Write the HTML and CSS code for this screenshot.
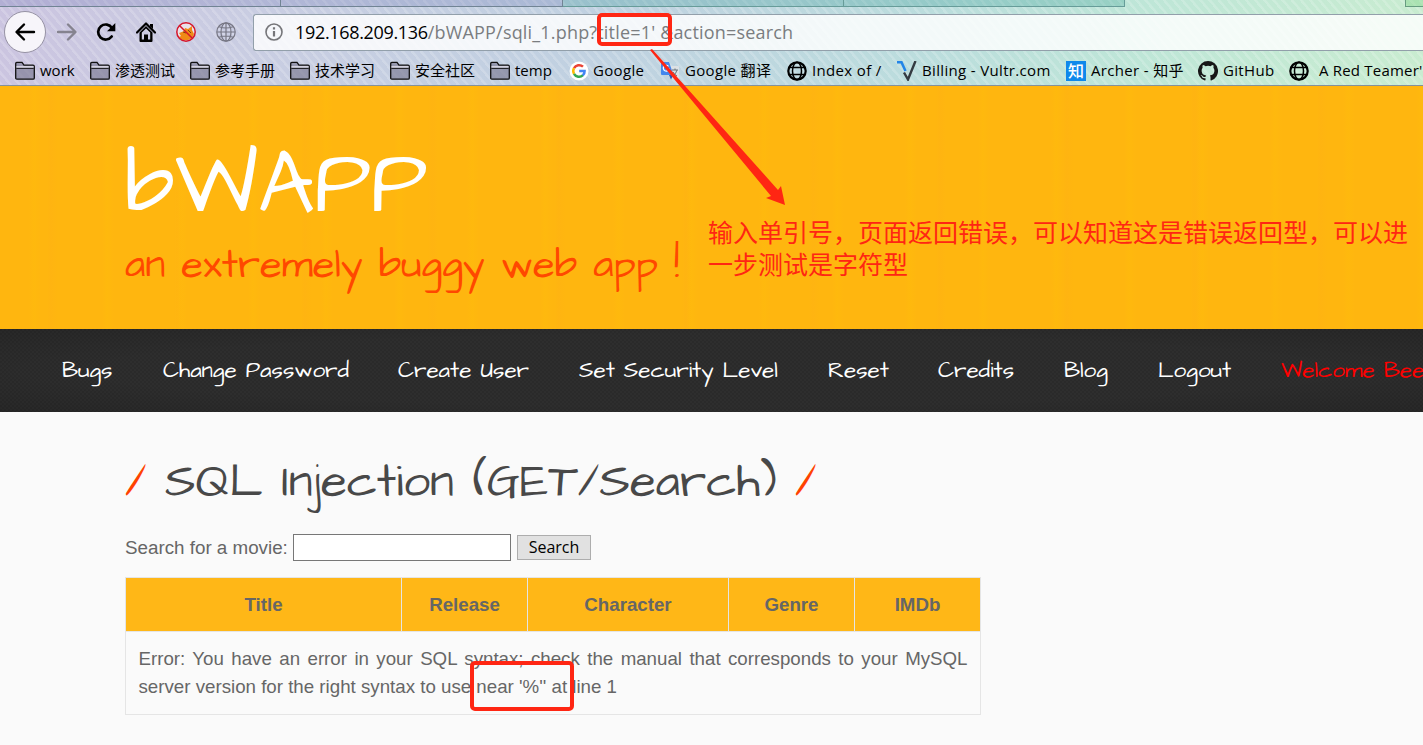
FILE: index.html
```html
<!DOCTYPE html>
<html lang="zh-CN">
<head>
<meta charset="utf-8">
<title>bWAPP - SQL Injection</title>
<link rel="stylesheet" href="styles.css">
</head>
<body>
<svg class="defs" width="0" height="0" aria-hidden="true">
  <symbol id="folder" viewBox="0 0 20 20"><path d="M.7 17V2.500Q.7 1.400 1.800 1.400H7L9 4.200h9q1.300 0 1.300 1.200V17q0 1.200-1.200 1.200H1.900Q.7 18.200.7 17Z" fill="#73718a" fill-opacity=".6" stroke="#111" stroke-width="1.300"/><path d="M1.300 7.300h17.400" stroke="#111" stroke-width="1.100"/><path d="M1.400 5.900h17.200" stroke="#e8e6f0" stroke-width="1.300"/></symbol>
  <symbol id="globe" viewBox="0 0 20 20"><g fill="none" stroke="currentColor"><circle cx="10" cy="10" r="8.700" stroke-width="2.200"/><ellipse cx="10" cy="10" rx="4.500" ry="8.700" stroke-width="1.500"/><path d="M2.500 6.500h15M2.500 13.500h15" stroke-width="1.500"/></g></symbol>
</svg>
<header class="browser">
  <div class="tabs"><i></i><i></i><i></i><i></i><b></b></div>
  <div class="toolbar">
    <span class="back"><svg width="22" height="20" viewBox="0 0 22 20"><path d="M20 10H3M10 2.500 2.500 10l7.500 7.500" fill="none" stroke="#000" stroke-width="2.400" stroke-linecap="round" stroke-linejoin="round"/></svg></span>
    <svg class="forward" width="22" height="20" viewBox="0 0 22 20"><path d="M2 10h17M12 2.500l7.500 7.500-7.500 7.500" fill="none" stroke="#85838f" stroke-width="2.400" stroke-linecap="round" stroke-linejoin="round"/></svg>
    <svg class="reload" width="20" height="20" viewBox="0 0 20 20"><path d="M15.700 14.500A7.500 7.500 0 1 1 16 6" fill="none" stroke="#000" stroke-width="2.700" stroke-linecap="round"/><path d="M19.300 1v8.300h-8.300Z"/></svg>
    <svg class="home" width="20" height="20" viewBox="0 0 20 20"><path d="M1 10.500 10 1.500l9 9" fill="none" stroke="#000" stroke-width="2.200" stroke-linecap="round" stroke-linejoin="round"/><path d="M14 2h3v5l-3-2.800Z"/><path fill-rule="evenodd" d="M3.500 10.500 10 4l6.500 6.500V19q0 1-1 1h-11q-1 0-1-1ZM5.800 10.400V17.500H8v-5h4v5h2.200v-7.100L10 6.500Z"/><path d="M9.300 14h2v4h-2z"/></svg>
    <svg class="block" width="20" height="20" viewBox="0 0 20 20"><circle cx="10" cy="10" r="9" fill="#e9e1e9"/><path d="M3 11q3-1 5-2l1-3 3 1 4-3v4l2 4q-1 5-6 6-7 1-9-3l2-1Z" fill="#ef8a16"/><path d="m7 10 3 1M12 8l3 3" stroke="#86420c"/><circle cx="10" cy="10" r="9.200" fill="none" stroke="#d5152b" stroke-width="1.500"/><path d="m3.700 3.700 12.600 12.600" stroke="#d5152b" stroke-width="1.500"/></svg>
    <svg class="net" width="20" height="20" viewBox="0 0 20 20"><g fill="none" stroke="#777784" stroke-width="1.200"><circle cx="10" cy="10" r="9.200"/><ellipse cx="10" cy="10" rx="5" ry="9.200"/><path d="M10 1v18M1 10h18M3 4.700q7 2.600 14 0M3 15.300q7-2.600 14 0"/></g></svg>
    <div class="address">
      <svg width="18" height="18" viewBox="0 0 18 18"><circle cx="9" cy="9" r="8" fill="none" stroke="#757579" stroke-width="1.600"/><path d="M9 8v5.500M9 4.300v2.200" stroke="#757579" stroke-width="2.200"/></svg>
      <span class="url"><strong>192.168.209.136</strong>/bWAPP/sqli_1.php?title=1' &amp;action=search</span>
    </div>
  </div>
  <nav class="bookmarks">
    <span><svg><use href="#folder"/></svg><em>work</em></span>
    <span><svg><use href="#folder"/></svg><em>渗透测试</em></span>
    <span><svg><use href="#folder"/></svg><em>参考手册</em></span>
    <span><svg><use href="#folder"/></svg><em>技术学习</em></span>
    <span><svg><use href="#folder"/></svg><em>安全社区</em></span>
    <span><svg><use href="#folder"/></svg><em>temp</em></span>
    <span class="google"><svg viewBox="0 0 20 20"><circle cx="10" cy="10" r="9.500" fill="#fff"/><g fill="none" stroke-width="2.500"><path d="M5 7.200A5.800 5.800 0 0 1 14 5.700" stroke="#ea4335"/><path d="M5 12.800a5.800 5.800 0 0 1 0-5.600" stroke="#fbbc05"/><path d="M14 14.200a5.800 5.800 0 0 1-9-1.400" stroke="#34a853"/><path d="M10.200 10h5.400a5.500 5.500 0 0 1-1.800 4.400" stroke="#4285f4"/></g></svg><em class="wide">Google</em></span>
    <span><svg viewBox="0 0 20 20"><path d="M8 5h10q1 0 1 1v11q0 1-1 1h-7Z" fill="#dce1e5"/><path d="M2 1h7l4.500 13H2q-1 0-1-1V2q0-1 1-1Z" fill="#4387ed"/><path d="m9 14h4.500L11 18.500Z" fill="#2557b5"/><path d="M8.500 5.400A2.900 2.900 0 1 0 9 8H6.500" fill="none" stroke="#fff" stroke-width="1.200"/><path d="M12 9h6M15 7.500V9m2 0q-1 4-4 6m0-4q2 3 4 4" stroke="#68747c" fill="none"/></svg><em class="wide">Google 翻译</em></span>
    <span><svg><use href="#globe"/></svg><em class="wide">Index of /</em></span>
    <span><svg viewBox="0 0 20 20"><path d="M0 1.200h4.500L8.500 10" fill="none" stroke="#2385e8" stroke-width="2.500"/><path d="m7 11.500 4 7L18.500 0" fill="none" stroke="#343b42" stroke-width="2.400"/></svg><em class="wide">Billing - Vultr.com</em></span>
    <span><i class="zhi">知</i><em class="wide">Archer - 知乎</em></span>
    <span><svg viewBox="0 0 16 16"><path fill="#171717" d="M8 0a8 8 0 0 0-2.530 15.590c.4.070.55-.17.550-.38v-1.490c-2.230.48-2.700-.95-2.700-.95-.36-.92-.89-1.170-.89-1.170-.73-.5.050-.49.050-.49.810.060 1.230.83 1.230.83.720 1.220 1.880.87 2.340.66.070-.52.280-.87.510-1.070-1.780-.2-3.640-.89-3.640-3.950 0-.87.310-1.590.82-2.150-.08-.2-.36-1.020.08-2.120 0 0 .67-.21 2.200.82a7.600 7.600 0 0 1 4 0c1.530-1.040 2.200-.82 2.200-.82.440 1.100.160 1.920.080 2.120.510.560.82 1.270.82 2.150 0 3.070-1.870 3.750-3.650 3.950.290.250.540.730.540 1.480v2.200c0 .21.150.46.550.38A8 8 0 0 0 8 0"/></svg><em class="wide">GitHub</em></span>
    <span><svg><use href="#globe"/></svg><em class="wide last">A Red Teamer'</em></span>
  </nav>
</header>
<section class="banner">
  <h1>bWAPP</h1>
  <p class="tagline">an extremely buggy web app !</p>
</section>
<nav class="menu">
  <a class="m1">Bugs</a><a class="m2">Change Password</a><a class="m3">Create User</a><a class="m4">Set Security Level</a><a class="m5">Reset</a><a class="m6">Credits</a><a class="m7">Blog</a><a class="m8">Logout</a><a class="welcome">Welcome Bee</a>
</nav>
<main>
  <h2><span class="slash">/</span><span class="name">SQL Injection (GET/Search)</span><span class="slash">/</span></h2>
  <form class="search"><label for="title">Search for a movie:</label><input id="title" type="text"><button type="button">Search</button></form>
  <table>
    <tr><th class="c1">Title</th><th class="c2">Release</th><th class="c3">Character</th><th class="c2">Genre</th><th class="c2">IMDb</th></tr>
    <tr><td colspan="5">Error: You have an error in your SQL syntax; check the manual that corresponds to your MySQL server version for the right syntax to use near '%'' at line 1</td></tr>
  </table>
</main>
<div class="mark mark-url"></div>
<div class="mark mark-error"></div>
<svg class="arrow" width="140" height="160" viewBox="648 48 140 160"><path d="M650 50 652 49 778 190 781 186 785 205 766 198 771 196Z" fill="#ff2613"/></svg>
<p class="note">输入单引号，页面返回错误，可以知道这是错误返回型，可以进<br>一步测试是字符型</p>
</body>
</html>
```
FILE: styles.css
```css
* { box-sizing: border-box; }
body { margin: 0; width: 1423px; height: 745px; overflow: hidden; position: relative; background: #fafafa; color: #666; font-family: "Liberation Sans", Arial, sans-serif; }
.defs { position: absolute; }
.browser { height: 86px; border-bottom: 1px solid #84919b; color: #000; font-family: "Open Sans", "Noto Sans CJK SC", sans-serif;
  background: repeating-linear-gradient(50deg, rgba(255,255,255,.18) 0 2px, transparent 3px 7px), linear-gradient(100deg, #cbc4e0 0%, #c9cde2 18%, #c0d1e1 42%, #bbdddd 65%, #bee6d7 80%, #c9ecd0 100%); }
.tabs { height: 7px; display: flex; }
.tabs i { width: 281px; background: rgba(62,70,155,.17); border-right: 1px solid #718494; border-bottom: 1px solid #718494; }
.tabs i:nth-child(2) { width: 282px; }
.tabs i:nth-child(3), .tabs i:nth-child(4) { background: rgba(0,130,120,.2); border-color: #679c99; }
.tabs b { margin-left: auto; width: 18px; border-left: 1px solid #679c80; border-bottom: 1px solid #679c80; background: rgba(60,190,70,.22); }
.toolbar { height: 50px; display: flex; align-items: center; padding-left: 4px; }
.back { width: 42px; height: 42px; border-radius: 50%; border: 1px solid #9692a4; background: #f7f5fa; display: grid; place-items: center; }
.forward { margin-left: 10px; }
.reload { margin-left: 18px; }
.home, .block, .net { margin-left: 20px; }
.address { height: 37px; flex: 1; margin: 1px 0 0 17px; border: 1px solid #929faa; border-right: 0; border-radius: 3px 0 0 3px; background: rgba(255,255,255,.82); display: flex; align-items: center; padding: 0 0 1px 11px; gap: 12px; }
.url { white-space: nowrap; color: #7a7d80; font-size: 18px; letter-spacing: .18px; }
.url strong { font-weight: 400; color: #000; letter-spacing: -.33px; }
.bookmarks { height: 27px; padding-left: 15px; display: grid; grid-template-columns: 75px 100px 100px 100px 100px 79px 91px 127px 110px 169px 132px 91px 140px; align-items: center; }
.bookmarks span { display: flex; gap: 5px; align-items: center; }
.bookmarks .google { gap: 4px; }
.bookmarks svg { width: 20px; height: 20px; flex: none; }
.bookmarks em { font-style: normal; font-size: 15px; line-height: 22px; margin-bottom: 2px; white-space: nowrap; }
.bookmarks .wide { letter-spacing: .34px; }
.bookmarks .last { margin-left: 5px; letter-spacing: .2px; }
.zhi { width: 20px; height: 20px; background: #0f88eb; color: #fff; font: 500 16px/19px "Noto Sans CJK SC", sans-serif; text-align: center; }
.banner { height: 243px; padding-left: 125px; font-family: "Architects Daughter", Lato, sans-serif;
  background: repeating-linear-gradient(90deg, transparent 0 29px, rgba(255,205,0,.12) 34px, transparent 41px 73px), repeating-linear-gradient(90deg, transparent 0 47px, rgba(255,165,30,.12) 51px, transparent 57px 127px), #ffb60f; }
h1 { margin: 0; padding-top: 52px; color: #fff; font-size: 88.500px; line-height: 96px; font-weight: 400; }
.tagline { width: 570px; margin: 7px 0 0; color: #ff4800; font-size: 40px; line-height: 50px; white-space: nowrap; }
.menu { height: 83px; padding-left: 62px; display: flex; align-items: center; color: #fff; font: 22.550px/30px "Architects Daughter", Lato, sans-serif; white-space: nowrap;
  background: radial-gradient(ellipse at 50% 50%, transparent 60%, rgba(0,0,0,.14) 100%), repeating-conic-gradient(#2e2e2e 0 25%, #2a2a2a 0 50%) 0 0 / 4px 4px; }
.menu a { flex: none; }
.m1 { width: 101px; } .m2 { width: 235px; } .m3 { width: 181px; } .m4 { width: 249px; } .m5 { width: 110px; } .m6 { width: 126px; } .m7 { width: 94px; } .m8 { width: 123px; }
.menu .welcome { color: #f00; }
main { padding: 35px 0 0 125px; }
h2 { margin: 0; height: 68px; display: flex; color: #484848; font: 400 47.600px/70px "Architects Daughter", Lato, sans-serif; white-space: nowrap; }
h2 .name { width: 630px; }
h2 .slash { width: 40px; color: #ff4200; }
.search { height: 28px; margin-top: 18px; display: flex; align-items: center; font-size: 18.800px; }
label { width: 168px; padding-top: 1px; white-space: nowrap; }
input { width: 218px; height: 27px; border: 1px solid #777; background: #fff; padding: 0; }
button { width: 74px; height: 25px; margin-left: 6px; padding: 0; border: 1px solid #adadad; background: #e1e1e1; color: #000; font: 16px/20px "Open Sans", sans-serif; }
table { width: 856px; margin-top: 16px; table-layout: fixed; border-collapse: collapse; font-size: 18.720px; line-height: 28px; }
th, td { border: 1px solid #e5e5e5; }
th { height: 54px; padding: 0; background: #ffb717; }
.c1 { width: 276px; } .c2 { width: 126px; } .c3 { width: 201px; }
td { height: 83px; padding: 0 12.500px; text-align: justify; }
.mark { position: absolute; border: 4px solid #ff2613; border-radius: 5px; }
.mark-url { left: 597px; top: 13px; width: 75px; height: 33px; }
.mark-error { left: 470px; top: 661px; width: 104px; height: 50px; }
.arrow { position: absolute; left: 648px; top: 48px; }
.note { position: absolute; left: 708px; top: 215px; margin: 0; color: #ff2613; font: 25px/32px "Noto Sans CJK SC", sans-serif; white-space: nowrap; }
```
